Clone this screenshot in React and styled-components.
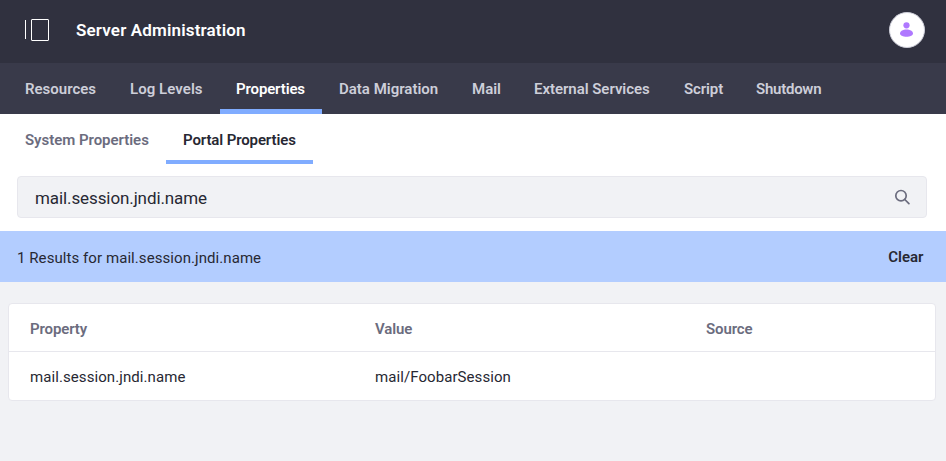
import React from "react";
import styled, { createGlobalStyle } from "styled-components";

const GlobalStyle = createGlobalStyle`
  * { box-sizing: border-box; }
  body { margin: 0; background: #f1f2f5; color: #272833; font-family: Roboto, "Liberation Sans", sans-serif; font-size: 15px; overflow: hidden; }
`;
const Page = styled.main`min-height: 461px;`;
const Header = styled.header`
  height: 63px; background: #30313f; display: flex; align-items: center;
  padding: 0 21px 3px 25px;
`;
const Title = styled.h1`
  margin: 0 auto 0 27px; color: #fff; font-size: 17px; font-weight: 600; line-height: 24px;
  letter-spacing: 0.16px;
`;
const Avatar = styled.div`
  width: 36px; height: 36px; border-radius: 50%; background: #fff; display: flex;
  align-items: center; justify-content: center; border: 1px solid #cdced9; padding: 0 1px 1px 0;
`;
const Nav = styled.nav`
  height: ${(p) => (p.$dark ? 51 : 50)}px; display: flex; padding-left: 8px;
  background: ${(p) => (p.$dark ? "#393a4a" : "#fff")};
`;
const Tab = styled.a`
  flex: 0 0 ${(p) => p.$width}px; padding-left: ${(p) => p.$pad}px;
  font-weight: 600; line-height: 52px; white-space: nowrap;
  letter-spacing: ${(p) => p.$spacing}px;
  color: ${(p) => p.$color};
  box-shadow: ${(p) => (p.$active ? `inset 0 -${p.$bar}px #80acff` : "none")};
`;
const SearchArea = styled.section`background: #fff; padding: 12px 19px 13px 17px; height: 67px;`;
const SearchBox = styled.div`
  height: 42px; display: flex; align-items: center; justify-content: space-between;
  border: 1px solid #e7e7ed; border-radius: 4px; background: #f1f2f5; padding: 2px 16px 0 17px;
  font-size: 17px; letter-spacing: -0.1px;
`;
const SearchIcon = styled.svg`margin-bottom: 2px;`;
const Results = styled.section`
  height: 51px; padding: 2px 22.5px 0 17px; background: #b3cdff; display: flex;
  align-items: center; justify-content: space-between; letter-spacing: 0.07px;
`;
const Clear = styled.a`font-weight: 600; padding-bottom: 2px; letter-spacing: 0;`;
const Table = styled.section`
  margin: 21px 10px 0 8px; background: #fff; border: 1px solid #e7e7ed; border-radius: 4px;
`;
const Row = styled.div`
  display: grid; grid-template-columns: 345px 331px 1fr; padding: 2px 0 0 21px;
  height: 48px; align-items: center; letter-spacing: 0.08px;
  ${(p) => p.$head && "color: #6b6c7e; font-weight: 600; border-bottom: 1px solid #e7e7ed; letter-spacing: -0.12px;"}
`;

const mainTabs = [
  { label: "Resources", width: 105, pad: 17, spacing: 0 },
  { label: "Log Levels", width: 107, pad: 17, spacing: 0.06 },
  { label: "Properties", width: 102, pad: 16, spacing: -0.14 },
  { label: "Data Migration", width: 133, pad: 17, spacing: 0 },
  { label: "Mail", width: 62, pad: 17, spacing: 0 },
  { label: "External Services", width: 150, pad: 17, spacing: -0.04 },
  { label: "Script", width: 73, pad: 17, spacing: -0.1 },
  { label: "Shutdown", width: 98, pad: 16, spacing: -0.25 },
];
const subTabs = [
  { label: "System Properties", width: 158, pad: 17, spacing: -0.04 },
  { label: "Portal Properties", width: 147, pad: 17, spacing: -0.12 },
];

export default function App() {
  return (
    <Page>
      <GlobalStyle />
      <Header>
        <svg width="24" height="22" viewBox="0 0 24 22" fill="none" stroke="#fff">
          <path d="M.5 1v19" /><rect x="6.5" y=".5" width="17" height="21" rx=".5" />
        </svg>
        <Title>Server Administration</Title>
        <Avatar>
          <svg width="13" height="15" viewBox="0 0 13 15" fill="#af78ff">
            <circle cx="6.500" cy="3.300" r="3.100" />
            <path d="M0 11.500C0 9.100 3 7.500 6.500 7.500S13 9.100 13 11.500c0 2-3 3.200-6.500 3.200S0 13.500 0 11.500Z" />
          </svg>
        </Avatar>
      </Header>
      <Nav $dark>
        {mainTabs.map((t, i) => (
          <Tab key={t.label} $width={t.width} $spacing={t.spacing} $pad={t.pad} $bar={5} $active={i === 2} $color={i === 2 ? "#fff" : "#cdced9"}>{t.label}</Tab>
        ))}
      </Nav>
      <Nav>
        {subTabs.map((t, i) => (
          <Tab key={t.label} $width={t.width} $spacing={t.spacing} $pad={t.pad} $bar={4} $active={i === 1} $color={i === 1 ? "#272833" : "#6b6c7e"}>{t.label}</Tab>
        ))}
      </Nav>
      <SearchArea>
        <SearchBox>
          <span>mail.session.jndi.name</span>
          <SearchIcon width="16" height="16" viewBox="0 0 16 16" fill="none" stroke="#6b6c7e" strokeWidth="1.700" strokeLinecap="round">
            <circle cx="7" cy="6.700" r="5.200" /><path d="m10.800 10.500 4.100 4.200" />
          </SearchIcon>
        </SearchBox>
      </SearchArea>
      <Results><span>1 Results for mail.session.jndi.name</span><Clear>Clear</Clear></Results>
      <Table>
        <Row $head><span>Property</span><span>Value</span><span>Source</span></Row>
        <Row><span>mail.session.jndi.name</span><span>mail/FoobarSession</span><span /></Row>
      </Table>
    </Page>
  );
}
